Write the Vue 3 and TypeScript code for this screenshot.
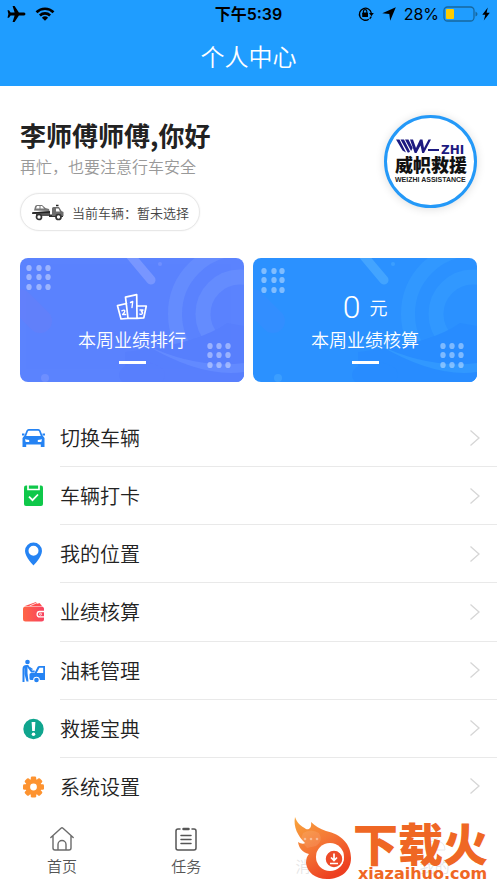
<script setup lang="ts">
interface Card { id: string; title: string; amount?: string; unit?: string; dots: number[]; dotsTop: number[] }
interface MenuItem { icon: string; label: string }

const cards: Card[] = [
  { id: 'rank', title: '本周业绩排行', dots: [9, 19, 28], dotsTop: [10, 19, 29] },
  { id: 'account', title: '本周业绩核算', amount: '0', unit: '元', dots: [11, 21, 29], dotsTop: [13, 22, 32] },
]
const cornerX = [190, 199, 208]
const cornerY = [88, 97, 107]

const menu: MenuItem[] = [
  { icon: 'car', label: '切换车辆' },
  { icon: 'check', label: '车辆打卡' },
  { icon: 'pin', label: '我的位置' },
  { icon: 'wallet', label: '业绩核算' },
  { icon: 'fuel', label: '油耗管理' },
  { icon: 'alert', label: '救援宝典' },
  { icon: 'gear', label: '系统设置' },
]
const teeth = [0, 45, 90, 135, 180, 225, 270, 315]
</script>

<template>
  <div class="page">
    <header class="header">
      <div class="status">
        <div class="status-side">
          <svg width="19" height="18" viewBox="0 0 19 18"><path d="M18.500 9c0-.9-.9-1.500-2-1.500h-4.600L7.600 1H5.600l2 6.500H3.600L2 5.300H.5L1.400 9 .5 12.700H2l1.600-2.200h4l-2 6.500h2l4.300-6.500h4.600c1.100 0 2-.6 2-1.500z" /></svg>
          <svg width="20" height="14" viewBox="0 0 20 14"><g fill="none" stroke="#000" stroke-width="2.600"><path d="M1.500 5.200a12.200 12.200 0 0 1 17 0" /><path d="M4.900 8.500a7.300 7.300 0 0 1 10.200 0" /></g><path d="M6.900 10.700a4.500 4.500 0 0 1 6.200 0L10 13.800z" /></svg>
        </div>
        <div class="time">下午5:39</div>
        <div class="status-side right">
          <svg width="16" height="16" viewBox="0 0 16 16"><path d="M10.800 13.200A6 6 0 1 1 13.300 7" fill="none" stroke="#000" stroke-width="1.300" /><path d="M11 7h4.800l-2.400 3.200z" /><rect x="4.200" y="6.600" width="5.800" height="4.400" rx=".6" /><path d="M5.400 7V5.300a1.700 1.700 0 0 1 3.400 0V7" fill="none" stroke="#000" stroke-width="1.100" /><path d="M13.300 10.500a6 6 0 0 1-1.600 2.200" fill="none" stroke="#000" stroke-width="1.300" /></svg>
          <svg class="locate" width="14" height="14" viewBox="0 0 14 14"><path d="M13.800.3 8.200 13.700 7.300 7 .3 6.200z" /></svg>
          <span class="percent">28%</span>
          <svg class="battery" width="35" height="16" viewBox="0 0 35 16"><rect x="1" y="1" width="30" height="14" rx="3.500" fill="none" stroke="#17679f" stroke-width="1.300" /><rect x="3" y="3" width="8" height="10" rx="1" fill="#fc0" /><path d="M32.500 5.500q2 1 2 2.500t-2 2.500z" fill="#17679f" /></svg>
          <svg width="8" height="14" viewBox="0 0 8 14"><path d="M5.800.5.300 7.700h3L1.800 13.500 7.800 5.800H4.600z" /></svg>
        </div>
      </div>
      <h1>个人中心</h1>
    </header>

    <section class="profile">
      <div class="hello">
        <h2>李师傅师傅,你好</h2>
        <p>再忙，也要注意行车安全</p>
        <button class="vehicle" type="button">
          <svg width="34" height="18" viewBox="0 0 34 18">
            <path d="M1 9.500 19 8v5H5v-2H1z" fill="#555" />
            <path d="M18 11.500h14V14H18z" fill="#333" />
            <path d="M21 12V5.500q0-1.500 1.500-1.500H28L30.500 8l2 1v4H21z" fill="#6d6d6d" />
            <path d="M3 7.500 4 3.500q.3-1.500 2-1.500h5l3.500 3 3.500 1 .5 2z" fill="#777" />
            <path d="M5 5.500 6 3h2.500v2.500zM9.500 3H11l2 2.500H9.500zM25 5.500h2.500L29 8.500h-4z" fill="#fff" />
            <path d="M1.500 10 19 9M25 2.500h2.500" stroke="#222" stroke-width="1.500" />
            <g fill="#fff" stroke="#333" stroke-width="1.700"><circle cx="8" cy="14" r="2.500" /><circle cx="27.500" cy="14" r="2.500" /></g>
          </svg>
          <span>当前车辆：暂未选择</span>
        </button>
      </div>
      <div class="avatar">
        <svg viewBox="0 0 87 87" role="img" aria-label="威帜救援">
          <g fill="#1d1a80">
            <path d="M9 21.500h3.500l6.500 13-3.500-2zM13.500 21.500H17l6 12-1 1h-1.300zM18 21.500h3.500l4.200 8.500-1.600 3z" />
            <path d="M23 21.500h3l3 8.500 4-8.500h2.500L37 30l4.500-8.500H44L37 35h-1.800l-1.700-7.500-4 7.500h-1.800z" />
            <rect x="41" y="31" width="11" height="2" />
          </g>
          <text class="logo-zhi" x="54" y="36">ZHI</text>
          <text class="logo-cn" x="8" y="54">威帜救援</text>
          <text class="logo-en" x="8" y="64">WEIZHI ASSISTANCE</text>
        </svg>
      </div>
    </section>

    <section class="cards">
      <button v-for="card in cards" :key="card.id" type="button" class="card" :class="card.id">
        <svg class="art" viewBox="0 0 224 124" preserveAspectRatio="xMidYMid slice" aria-hidden="true">
          <g class="glow" fill="none">
            <circle cx="220" cy="56" r="65" stroke-width="14" />
            <circle cx="220" cy="56" r="37" stroke-width="15" />
          </g>
          <path class="wave" d="M105 94q42-5 65-12t37-17l17 3v56H105z" />
          <path class="ribbon" d="M126 87q50 24 98 18v9q-42 6-98-27z" />
          <path class="capsule" d="M0 43 20 63" />
          <path class="beam" d="m110-3 21 25" />
          <circle class="bubble" cx="25" cy="120" r="4" />
          <circle class="bubble" cx="140" cy="6" r="2" />
          <ellipse class="wave" cx="122" cy="117" rx="23" ry="13" />
          <g class="dots">
            <template v-for="row in 3" :key="row">
              <ellipse v-for="col in 3" :key="col" :cx="card.dots[col - 1]" :cy="card.dotsTop[row - 1]" rx="2.700" ry="3.100" />
              <ellipse v-for="col in 3" :key="'c' + col" :cx="cornerX[col - 1]" :cy="cornerY[row - 1]" rx="2.700" ry="3.100" />
            </template>
          </g>
        </svg>
        <span class="card-top">
          <span v-if="card.amount" class="amount"><b>{{ card.amount }}</b><span>{{ card.unit }}</span></span>
          <svg v-else width="32" height="28" viewBox="0 0 32 28" fill="none" stroke="#fff" stroke-width="1.700" stroke-linejoin="round" stroke-linecap="round">
            <path d="m9.500 4.200 11.200-2.500.3 23.600H12zM10.500 10.500 1.500 12.700 5 26l7-.7M21 13h9.300l-2.500 11.800-6.800.5" />
            <path d="m14.500 9.500 2.200-1-.7 6M5.800 17.800q3-1.500 3 .5 0 1.200-2.200 3.200h3M24 17h3l-1.600 1.800q2 .5.500 2.200-1 .7-2 .1" stroke-width="1.400" />
          </svg>
        </span>
        <span class="card-title">{{ card.title }}</span>
        <i class="dash"></i>
      </button>
    </section>

    <nav class="menu">
      <a v-for="item in menu" :key="item.icon" href="#" class="row">
        <svg class="row-icon" width="27" height="26" viewBox="0 0 27 26">
          <g v-if="item.icon === 'car'">
            <path d="M2.500 13 4.500 10.500 6.500 5.500q.6-1.500 2.200-1.500h9.600q1.600 0 2.200 1.500l2 5 2 2.500V22h-3.700v-2.500H6.200V22H2.500z" fill="#2583f3" />
            <path d="M6.200 11 8 6.300q.2-.5.800-.5h9.400q.6 0 .8.500l1.800 4.700zM5 14.300l4.200.8V17H5.700zM22 14.300l-4.200.8V17h3.500z" fill="#fff" />
            <path d="M2 9.500h2.500M22.500 9.500H25" stroke="#2583f3" stroke-width="2" />
          </g>
          <g v-else-if="item.icon === 'check'">
            <path d="M6 2.500h15q2 0 2 2V21q0 2-2 2H6q-2 0-2-2V4.500q0-2 2-2z" fill="#0fc84a" />
            <path d="M8 2v4.500h11V2" fill="none" stroke="#fff" stroke-width="1.700" />
            <path d="m9 13.700 3.500 3.500 5.500-5.700" fill="none" stroke="#fff" stroke-width="1.800" />
          </g>
          <path v-else-if="item.icon === 'pin'" d="M13.500 1.500A8.500 8.500 0 0 0 5 10c0 6 8.500 14.500 8.500 14.500S22 16 22 10a8.500 8.500 0 0 0-8.500-8.500zm0 13.200a5 5 0 1 1 0-10 5 5 0 0 1 0 10z" fill="#2583f3" />
          <g v-else-if="item.icon === 'wallet'">
            <defs><linearGradient id="wallet-fill"><stop stop-color="#ff6545" /><stop offset="1" stop-color="#f84260" /></linearGradient></defs>
            <path d="M5 7 16 3l3 4zM12 7l7.500-3L22 7z" fill="#ff4d4d" />
            <path d="m9.500 7 8-3.500" stroke="#fff" stroke-width=".8" />
            <rect x="3" y="7.500" width="21" height="15" rx="2.500" fill="url(#wallet-fill)" />
            <path d="M24 12.500h-4.200a2.700 2.700 0 0 0 0 5.400H24" fill="none" stroke="#fff" stroke-width="1.300" />
            <circle cx="20.500" cy="15.200" r="1" fill="none" stroke="#fff" stroke-width=".8" />
          </g>
          <g v-else-if="item.icon === 'fuel'" fill="#2583f3">
            <circle cx="7.500" cy="4" r="2.300" />
            <path d="M3.500 24V11q0-3 3-3h1.200l4 5.500h3" fill="none" stroke="#2583f3" stroke-width="2" />
            <path d="M4.500 9h3v6l1 8.500h-2L4.500 16z" />
            <path d="m9.500 9.500 3 2" stroke="#2583f3" stroke-width="1.500" />
            <path d="M9.500 16.500q0-1.500 1.500-1.500h3.500l3-6q.6-1 2-1H25v14H11q-1.500 0-1.500-1.500z" />
            <path d="M19.500 9.700h3.700V15h-6.500z" fill="#fff" />
            <circle cx="16.500" cy="22" r="3.300" fill="#fff" /><circle cx="16.500" cy="22" r="2.300" />
          </g>
          <g v-else-if="item.icon === 'alert'">
            <circle cx="13.500" cy="13" r="10.200" fill="#10a58e" />
            <path d="M11.600 6h3.800L14.800 15h-2.600z" fill="#fff" /><circle cx="13.500" cy="18.200" r="1.800" fill="#fff" />
          </g>
          <g v-else fill="#fd9330">
            <rect v-for="angle in teeth" :key="angle" x="10.800" y="2.500" width="5.400" height="6" rx="1.300" :transform="`rotate(${angle} 13.500 13)`" />
            <circle cx="13.500" cy="13" r="5.700" fill="none" stroke="#fd9330" stroke-width="4.600" />
          </g>
        </svg>
        <span class="row-body">
          <span>{{ item.label }}</span>
          <svg width="12" height="18" viewBox="0 0 12 18"><path d="m1.500 1.500 8.500 7.500-8.500 7.500" fill="none" stroke="#d6d6d6" stroke-width="1.300" /></svg>
        </span>
      </a>
    </nav>

    <footer class="footer">
      <nav class="tabs">
        <a href="#" class="tab">
          <svg width="26" height="26" viewBox="0 0 26 26" fill="none" stroke="#6b6b6b" stroke-width="1.400" stroke-linejoin="round" stroke-linecap="round"><path d="M1.800 11.500 12 2.200q1-.8 2 0l10.200 9.300M4 10v12q0 2 2 2h14q2 0 2-2V10M9 24v-5.500a4 4 0 0 1 8 0V24" /></svg>
          <span>首页</span>
        </a>
        <a href="#" class="tab">
          <svg width="26" height="26" viewBox="0 0 26 26" fill="none" stroke="#555" stroke-width="1.500" stroke-linecap="round"><path d="M7 3H5Q3 3 3 5v17q0 2 2 2h16q2 0 2-2V5q0-2-2-2h-2M8 9.500h10M8 13.500h10M8 17.500h10" /><path d="M10.500 3h5" stroke-width="2.500" /></svg>
          <span>任务</span>
        </a>
        <a href="#" class="tab faint">
          <svg width="26" height="26" viewBox="0 0 26 26" />
          <span>消息</span>
        </a>
        <a href="#" class="tab faint">
          <svg width="26" height="26" viewBox="0 0 26 26" fill="none" stroke="#777"><circle cx="13" cy="8" r="5" /><path d="M3 24q0-9 10-9t10 9z" /></svg>
          <span>我的</span>
        </a>
      </nav>
      <svg class="brand" width="204" height="68" viewBox="0 0 204 68">
        <defs>
          <linearGradient id="flame" x1="0" y1="0" x2=".6" y2="1"><stop stop-color="#f9a53c" /><stop offset=".5" stop-color="#f47736" /><stop offset="1" stop-color="#ed3f20" /></linearGradient>
        </defs>
        <path d="M2 2C4 8 8 11 13 14c3 1 6-1 5-7 4 4 9 7 15 9 15 3 25 13 25 27 0 13-10 21-24 21-12 0-20-7-21-16 0-4 1-7 3-9-7-2-10-6-11-12 3 2 6 2 7 1C5 21 0 12 2 2z" fill="url(#flame)" />
        <circle cx="37" cy="42" r="14" fill="#fff" />
        <circle cx="41" cy="44" r="9" fill="#ed4a28" stroke="#fff" stroke-width="1.500" />
        <path d="M41 38.500v7m-3-3 3 3 3-3M37 48.500h8" fill="none" stroke="#fff" stroke-width="1.700" />
        <path d="M10 18q8-5 16 0 5 8-3 13l-9 2q-8-8-4-15z" fill="#fff" opacity=".1" />
        <g fill="#fff" opacity=".4"><circle cx="12" cy="24" r="1.300" /><circle cx="18" cy="24" r="1.300" /><circle cx="24" cy="24" r="1.300" /></g>
        <text class="brand-cn" x="60" y="47">下载火</text>
        <text class="brand-url" x="65" y="64">xiazaihuo.com</text>
      </svg>
    </footer>
  </div>
</template>

<style>
body { margin: 0; background: #fff; }
</style>

<style scoped>
.page { min-height: 100vh; display: flex; flex-direction: column; font-family: "Noto Sans CJK SC", sans-serif; font-weight: 350; color: #222; background: #fff; overflow-x: hidden; }
svg { display: block; flex: none; }
h1, h2, p { margin: 0; }
button { font: inherit; border: 0; }
a { color: inherit; text-decoration: none; }
.header { height: 86px; background: #1f9dff; }
.status { height: 28px; padding: 0 7px; display: grid; grid-template-columns: 1fr auto 1fr; align-items: center; color: #000; }
.status-side { display: flex; align-items: center; gap: 9px; }
.right { justify-content: flex-end; gap: 4px; }
.locate { margin: 0 4px; }
.time { font: 600 16px/28px Inter, "Noto Sans CJK SC", sans-serif; }
.percent { font: 400 16px/28px Inter, sans-serif; }
h1 { color: #fff; font-size: 24px; line-height: 56px; font-weight: 350; text-align: center; }
.profile { display: flex; justify-content: space-between; align-items: flex-start; padding: 29px 20px 27px; }
h2 { font-size: 26px; line-height: 40px; font-weight: 700; }
p { font-size: 16px; line-height: 22px; color: #999; }
.vehicle { display: flex; align-items: center; gap: 7px; height: 38px; margin-top: 16px; padding: 0 10px; border: 1px solid #e8e8e8; border-radius: 19px; background: #fff; font-size: 13px; color: #444; box-shadow: 0 0 2px #eee; }
.avatar { width: 87px; height: 87px; border: 3px solid #2499f8; border-radius: 50%; background: #fff; box-shadow: 0 1px 10px #ddd; }
.logo-zhi { font: 700 12px "DejaVu Sans", sans-serif; fill: #1d1a80; }
.logo-cn { font: 900 18px "Noto Sans CJK SC", sans-serif; fill: #111; }
.logo-en { font: 700 7px "Liberation Sans", sans-serif; fill: #222; }
.cards { display: grid; grid-template-columns: 1fr 1fr; gap: 9px; padding: 0 20px; }
.card { position: relative; overflow: hidden; height: 124px; padding: 31px 0 0; border-radius: 8px; color: #fff; display: flex; flex-direction: column; align-items: center; }
.rank { background: #5b83fe; }
.account { background: #2b91ff; }
.art { position: absolute; inset: 0; width: 100%; height: 100%; }
.glow { stroke: #658cfe; }
.wave { fill: #587ffd; }
.ribbon { fill: #638aff; }
.capsule { stroke: #6d7df8; stroke-width: 24; stroke-linecap: round; opacity: .4; }
.beam { stroke: #7897ff; stroke-width: 9; stroke-linecap: round; }
.bubble { fill: #7694ff; opacity: .7; }
.account .glow { stroke: #3198ff; }
.account .wave { fill: #288cff; }
.account .ribbon { fill: #3198ff; }
.account .capsule { stroke: #3d8cff; }
.account .beam { stroke: #43a4ff; }
.account .bubble { fill: #43a4ff; }
.dots { fill: #fff; opacity: .4; }
.card-top, .card-title, .dash { position: relative; }
.card-top { height: 36px; display: flex; align-items: center; }
.amount { display: flex; align-items: center; gap: 9px; font-size: 18px; line-height: 36px; }
.amount b { font: 300 32px/36px Roboto, sans-serif; }
.card-title { font-size: 18px; line-height: 28px; }
.dash { width: 27px; height: 3px; margin-top: 8px; background: #fff; }
.menu { flex: 1; margin-top: 27px; display: grid; grid-auto-rows: minmax(58px, 1fr); }
.row { display: grid; grid-template-columns: 27px 1fr; gap: 13px; align-items: center; padding-left: 20px; font-size: 20px; }
.row-body { align-self: stretch; display: flex; align-items: center; justify-content: space-between; padding-right: 16px; border-bottom: 1px solid #e9e9e9; }
.row:last-child .row-body { border-bottom-color: transparent; }
.footer { position: relative; height: 67px; }
.tabs { display: grid; grid-template-columns: repeat(4, 1fr); }
.tab { display: flex; flex-direction: column; align-items: center; padding-top: 10px; font-size: 15px; line-height: 28px; color: #555; }
.faint { opacity: .15; }
.brand { position: absolute; right: 0; bottom: 0; }
.brand-cn { font: 900 45px "Noto Sans CJK SC", sans-serif; fill: #ef6724; }
.brand-url { font: 700 16px "DejaVu Sans", sans-serif; fill: #ef6724; }
</style>
